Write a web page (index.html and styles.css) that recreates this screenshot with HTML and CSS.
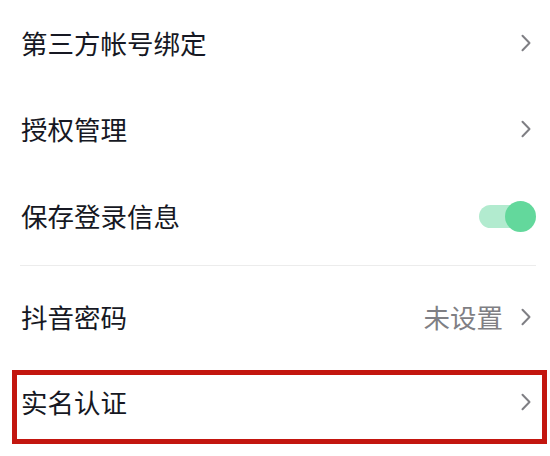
FILE: index.html
```html
<!DOCTYPE html>
<html lang="zh-CN">
<head>
<meta charset="utf-8">
<link rel="stylesheet" href="styles.css">
</head>
<body>
<div class="list">
  <div class="row">
    <span class="label">第三方帐号绑定</span>
    <svg class="chev" width="10" height="18" viewBox="0 0 10 18"><path d="M1.5 1.8 L8.5 9 L1.5 16.2" fill="none" stroke="#7f7f84" stroke-width="2" stroke-linecap="round" stroke-linejoin="round"/></svg>
  </div>
  <div class="row">
    <span class="label">授权管理</span>
    <svg class="chev" width="10" height="18" viewBox="0 0 10 18"><path d="M1.5 1.8 L8.5 9 L1.5 16.2" fill="none" stroke="#7f7f84" stroke-width="2" stroke-linecap="round" stroke-linejoin="round"/></svg>
  </div>
  <div class="row row-toggle">
    <span class="label">保存登录信息</span>
    <span class="toggle"><span class="track"></span><span class="knob"></span></span>
  </div>
  <div class="divider"><div class="line"></div></div>
  <div class="row">
    <span class="label">抖音密码</span>
    <span class="right"><span class="value">未设置</span>
    <svg class="chev" width="10" height="18" viewBox="0 0 10 18"><path d="M1.5 1.8 L8.5 9 L1.5 16.2" fill="none" stroke="#7f7f84" stroke-width="2" stroke-linecap="round" stroke-linejoin="round"/></svg></span>
  </div>
  <div class="highlight">
    <div class="row row-boxed">
      <span class="label">实名认证</span>
      <svg class="chev" width="10" height="18" viewBox="0 0 10 18"><path d="M1.5 1.8 L8.5 9 L1.5 16.2" fill="none" stroke="#7f7f84" stroke-width="2" stroke-linecap="round" stroke-linejoin="round"/></svg>
    </div>
  </div>
</div>
</body>
</html>
```
FILE: styles.css
```css
html, body {
  margin: 0;
  padding: 0;
  background: #ffffff;
}
body {
  width: 550px;
  height: 456px;
  overflow: hidden;
  font-family: "Noto Sans CJK SC", "Noto Sans", sans-serif;
  color: #161823;
}
.list {
  display: flex;
  flex-direction: column;
}
.row {
  height: 86px;
  display: flex;
  align-items: center;
  justify-content: space-between;
  padding: 0 19px 0 21px;
  box-sizing: border-box;
}
.label {
  font-size: 26.5px;
  line-height: 30px;
  letter-spacing: 0;
}
.chev {
  display: block;
  flex: none;
}
.right {
  display: flex;
  align-items: center;
  gap: 18px;
}
.value {
  font-size: 26.5px;
  line-height: 30px;
  color: #7f7f84;
}
.row-toggle {
  padding-right: 14px;
  padding-top: 2px;
}
.toggle {
  position: relative;
  width: 57px;
  height: 31px;
  flex: none;
}
.track {
  position: absolute;
  left: 0;
  top: 4px;
  width: 50px;
  height: 23px;
  border-radius: 12px;
  background: #b2ebcf;
}
.knob {
  position: absolute;
  right: 0;
  top: 0;
  width: 31px;
  height: 31px;
  border-radius: 50%;
  background: #63d89c;
}
.divider {
  height: 16px;
  padding: 7px 14px 0 20px;
  box-sizing: border-box;
}
.line {
  height: 1px;
  background: #ececec;
}
.highlight {
  margin: 10px 3px 0 12px;
  border: 5px solid #c3160f;
  height: 74px;
  box-sizing: border-box;
}
.row-boxed {
  height: 64px;
  padding: 0 11px 10px 4px;
}
```
